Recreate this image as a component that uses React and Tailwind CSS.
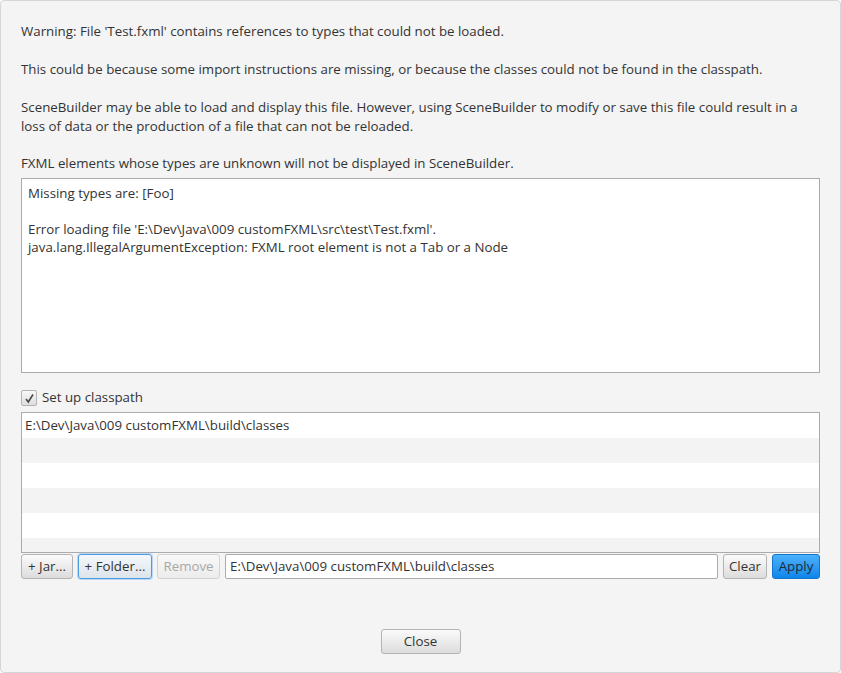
import React from "react";

const btn =
  "h-[25px] rounded-[3px] border border-[#b3b3b3] bg-gradient-to-b from-[#fbfbfb] to-[#dcdcdc] text-[#333] px-[4px] flex items-center justify-center leading-none whitespace-nowrap shrink-0";

export default function App() {
  const rows = [0, 1, 2, 3, 4, 5];
  return (
    <div
      className="w-[841px] h-[673px] bg-[#f4f4f4] border border-[#d6d6d6] rounded-[4px] text-[13.3px] text-[#333] flex flex-col px-[20px] overflow-hidden"
      style={{ fontFamily: '"Open Sans", "Noto Sans", sans-serif' }}
    >
      <div className="leading-[19px] pt-[21px]">
        Warning: File 'Test.fxml' contains references to types that could not be loaded.
      </div>
      <div className="leading-[19px] mt-[19px]">
        This could be because some import instructions are missing, or because the classes could not be found in the classpath.
      </div>
      <div className="leading-[19px] mt-[19px]">
        SceneBuilder may be able to load and display this file. However, using SceneBuilder to modify or save this file could result in a loss of data or the production of a file that can not be reloaded.
      </div>
      <div className="leading-[19px] mt-[18px]">
        FXML elements whose types are unknown will not be displayed in SceneBuilder.
      </div>
      <div className="mt-[5px] h-[195px] bg-white border border-[#ababab] px-[6px] pt-[5px] leading-[18px] shrink-0">
        <div>Missing types are: [Foo]</div>
        <div className="h-[18px]" />
        <div>Error loading file 'E:\Dev\Java\009 customFXML\src\test\Test.fxml'.</div>
        <div>java.lang.IllegalArgumentException: FXML root element is not a Tab or a Node</div>
      </div>
      <div className="mt-[17px] flex items-center gap-[5px] h-[16px]">
        <div className="w-[16px] h-[16px] rounded-[2px] border border-[#b3b3b3] bg-gradient-to-b from-[#f8f8f8] to-[#dedede] flex items-center justify-center">
          <svg width="11" height="11" viewBox="0 0 11 11">
            <path d="M2 6 L4.3 9 L9 1.5" fill="none" stroke="#4a4a4a" strokeWidth="1.6" />
          </svg>
        </div>
        <span className="leading-none">Set up classpath</span>
      </div>
      <div className="mt-[6px] h-[141px] bg-white border border-[#ababab] flex flex-col overflow-hidden shrink-0">
        {rows.map((i) => (
          <div
            key={i}
            className={
              "h-[25px] shrink-0 flex items-center pl-[3px] " +
              (i % 2 === 0 ? "bg-white" : "bg-[#f3f3f3]")
            }
          >
            {i === 0 ? "E:\\Dev\\Java\\009 customFXML\\build\\classes" : ""}
          </div>
        ))}
      </div>
      <div className="mt-[1px] flex items-center gap-[5px] h-[25px]">
        <button className={btn + " w-[52px]"}>+ Jar...</button>
        <button className="h-[25px] w-[74px] shrink-0 rounded-[3px] border border-[#4c9be0] bg-gradient-to-b from-[#f4f8fc] to-[#dde4ea] text-[#333] flex items-center justify-center leading-none whitespace-nowrap shadow-[0_0_0_1px_#b9d8f5]">
          + Folder...
        </button>
        <button className="h-[25px] w-[63px] shrink-0 rounded-[3px] border border-[#d3d3d3] bg-gradient-to-b from-[#f8f8f8] to-[#ececec] text-[#a8a8a8] flex items-center justify-center leading-none">
          Remove
        </button>
        <div className="h-[25px] flex-1 min-w-0 bg-white border border-[#ababab] rounded-[2px] flex items-center pl-[4px] whitespace-nowrap">
          E:\Dev\Java\009 customFXML\build\classes
        </div>
        <button className={btn + " w-[44px]"}>Clear</button>
        <button className="h-[25px] w-[48px] shrink-0 rounded-[3px] border border-[#1475cc] bg-gradient-to-b from-[#49b0fb] to-[#0b86e9] text-[#1b2a3a] flex items-center justify-center leading-none">
          Apply
        </button>
      </div>
      <div className="flex justify-center mt-[50px]">
        <button className={btn + " w-[80px] h-[25px]"}>Close</button>
      </div>
    </div>
  );
}
